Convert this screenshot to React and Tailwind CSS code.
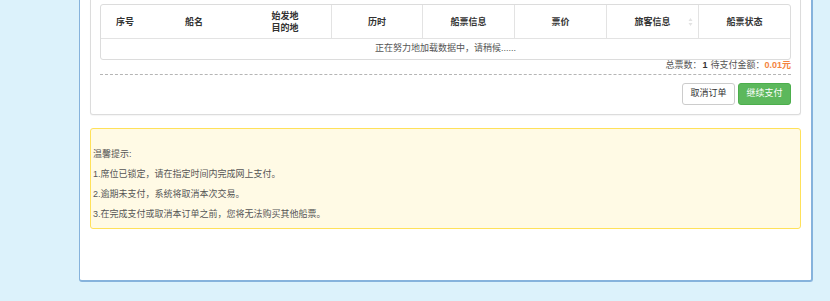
import { useState } from 'react';

const columns = [
  { key: 'no', label: '序号', w: 'w-[48px]', divider: false },
  { key: 'name', label: '船名', w: 'w-[90px]', divider: false },
  { key: 'route', label: ['始发地', '目的地'], w: 'w-[93px]', divider: true },
  { key: 'time', label: '历时', w: 'w-[91px]', divider: true },
  { key: 'ticket', label: '船票信息', w: 'w-[92px]', divider: true },
  { key: 'price', label: '票价', w: 'w-[92px]', divider: true },
  { key: 'passenger', label: '旅客信息', w: 'w-[92px]', divider: true, sortable: true },
  { key: 'status', label: '船票状态', w: 'flex-1', divider: false },
];

const tips = [
  '1.席位已锁定，请在指定时间内完成网上支付。',
  '2.逾期未支付，系统将取消本次交易。',
  '3.在完成支付或取消本订单之前，您将无法购买其他船票。',
];

function SortIcon() {
  return (
    <svg width="5" height="9" viewBox="0 0 5 9" className="absolute right-[5px] top-1/2 -translate-y-1/2">
      <path d="M2.5 0.5 L4.5 3.5 L0.5 3.5 Z" fill="#e3e3e3" />
      <path d="M2.5 8.5 L4.5 5.5 L0.5 5.5 Z" fill="#e3e3e3" />
    </svg>
  );
}

export default function App() {
  const [loading] = useState(true);

  return (
    <div
      className="min-h-[301px] bg-[#dcf2fb] pl-[79px] pr-[17px] pb-[19px] text-[#333]"
      style={{ fontFamily: '"Liberation Sans", "Noto Sans CJK SC", sans-serif' }}
    >
      <div className="h-[282px] bg-white border-l border-r-2 border-b-2 border-[#86b3dc] rounded-b-[3px] px-[10px]">
        {/* order card */}
        <div className="bg-white border-x border-b border-[#dcdcdc] rounded-b-[3px] px-[9px] pt-[4px] pb-[9px] shadow-[0_1px_1px_rgba(0,0,0,0.04)]">
          <div className="border border-[#dcdcdc] rounded-[3px] overflow-hidden">
            <div className="flex h-[34px] border-b border-[#e3e3e3] text-[9px] font-bold text-[#333]">
              {columns.map((c) => (
                <div
                  key={c.key}
                  className={`${c.w} relative flex flex-col items-center justify-center leading-[12px] ${c.divider ? 'border-r border-[#e3e3e3]' : ''}`}
                >
                  {Array.isArray(c.label) ? c.label.map((l) => <span key={l}>{l}</span>) : c.label}
                  {c.sortable && <SortIcon />}
                </div>
              ))}
            </div>
            <div className="h-[20px] flex items-center justify-center text-[9px] text-[#555]">
              {loading && '正在努力地加载数据中，请稍候......'}
            </div>
          </div>

          <div className="h-[15px] flex items-end justify-end pb-[2px] border-b border-dashed border-[#b5b5b5] text-[9px] text-[#555]">
            <span>总票数：</span>
            <span className="font-bold text-[#333] ml-[1px]">1</span>
            <span className="ml-[3px]">待支付金额：</span>
            <span className="font-bold text-[#f4843e]">0.01元</span>
          </div>

          <div className="flex justify-end gap-[3px] mt-[8px]">
            <button className="w-[53px] h-[22px] text-[9px] text-[#333] bg-white border border-[#cccccc] rounded-[3px]">
              取消订单
            </button>
            <button className="w-[53px] h-[22px] text-[9px] text-white bg-[#5cb85c] border border-[#4cae4c] rounded-[3px]">
              继续支付
            </button>
          </div>
        </div>

        {/* tips */}
        <div className="mt-[13px] h-[101px] bg-[#fffae5] border border-[#ffe15a] rounded-[3px] pl-[2px] pt-[15px] text-[9px] text-[#555] leading-[20px]">
          <p>温馨提示:</p>
          {tips.map((t) => (
            <p key={t}>{t}</p>
          ))}
        </div>
      </div>
    </div>
  );
}
